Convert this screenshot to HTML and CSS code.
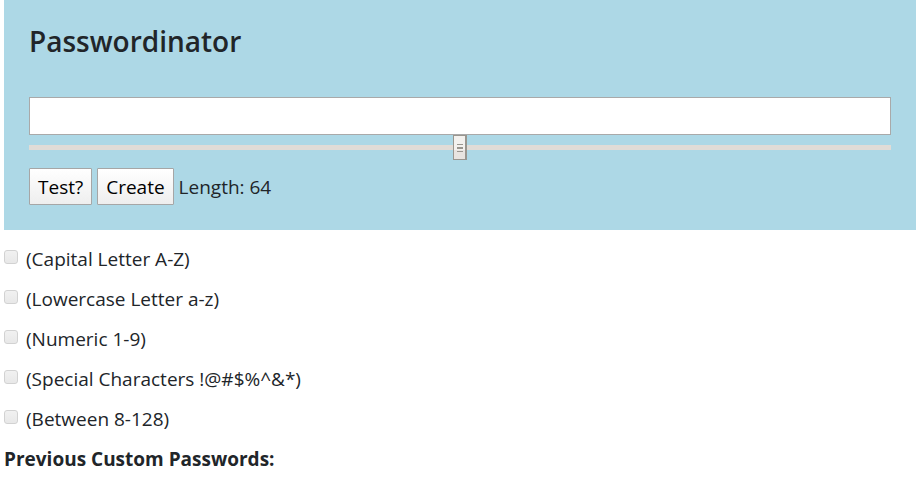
FILE: index.html
```html
<!DOCTYPE html>
<html lang="en">
<head>
<meta charset="utf-8">
<title>Passwordinator</title>
<link rel="stylesheet" href="styles.css">
</head>
<body>
<main>
<section class="panel">
<h1>Passwordinator</h1>
<input class="password" type="text" aria-label="Password">
<input class="slider" type="range" min="0" max="128" value="64" aria-label="Length">
<div class="actions">
<button type="button">Test?</button>
<button type="button">Create</button>
<span>Length: 64</span>
</div>
</section>
<form class="options">
<label><input type="checkbox"><span>(Capital Letter A-Z)</span></label>
<label><input type="checkbox"><span>(Lowercase Letter a-z)</span></label>
<label><input type="checkbox"><span>(Numeric 1-9)</span></label>
<label><input type="checkbox"><span>(Special Characters !@#$%^&amp;*)</span></label>
<label><input type="checkbox"><span>(Between 8-128)</span></label>
</form>
<h2>Previous Custom Passwords:</h2>
</main>
</body>
</html>
```
FILE: styles.css
```css
* {
  box-sizing: border-box;
}

body {
  margin: 0;
  background: #fff;
  color: #212529;
  font: 19px/30px "Segoe UI", "Open Sans", "Noto Sans", sans-serif;
}

main {
  padding: 0 3px 0 4px;
}

.panel {
  padding: 22px 25px 25px;
  background: #add8e6;
}

h1 {
  margin: 0 0 37px;
  font-size: 28px;
  font-weight: 600;
  line-height: 38px;
}

input,
button {
  margin: 0;
  font: inherit;
}

.password {
  display: block;
  width: 100%;
  height: 38px;
  padding: 3px 5px;
  border: 1px solid #a9a9a9;
  background: #fff;
}

.slider {
  display: block;
  width: 100%;
  height: 25px;
  appearance: none;
  background: linear-gradient(#e0dcd7, #e0dcd7) center / 100% 5px no-repeat;
}

.slider::-webkit-slider-thumb {
  appearance: none;
  width: 14px;
  height: 25px;
  border: 1px solid #99968f;
  border-right-width: 2px;
  background:
    linear-gradient(#99968f, #99968f) 3px 8px / 6px 1px no-repeat,
    linear-gradient(#99968f, #99968f) 3px 11px / 6px 2px no-repeat,
    linear-gradient(#99968f, #99968f) 3px 15px / 6px 1px no-repeat,
    linear-gradient(#f3f1ee 0 60%, #e8e4e0 60%);
}

.actions {
  display: flex;
  align-items: center;
  gap: 5px;
  margin-top: 8px;
}

button {
  height: 37px;
  padding: 0 8px;
  border: 1px solid #a6a6a6;
  border-radius: 1px;
  background: linear-gradient(#fff, #eee);
  color: #000;
}

.options {
  display: grid;
  gap: 10px;
  padding-top: 14px;
}

.options label {
  display: flex;
  align-items: flex-start;
  justify-self: start;
  gap: 8px;
}

.options input {
  appearance: none;
  width: 14px;
  height: 14px;
  margin-top: 6px;
  border: 1px solid #d2d2d2;
  border-radius: 3px;
  background: linear-gradient(#f1f1f1, #e8e8e8);
}

h2 {
  margin: 10px 0 0;
  font-size: 19px;
  font-weight: 700;
  line-height: 30px;
}
```
